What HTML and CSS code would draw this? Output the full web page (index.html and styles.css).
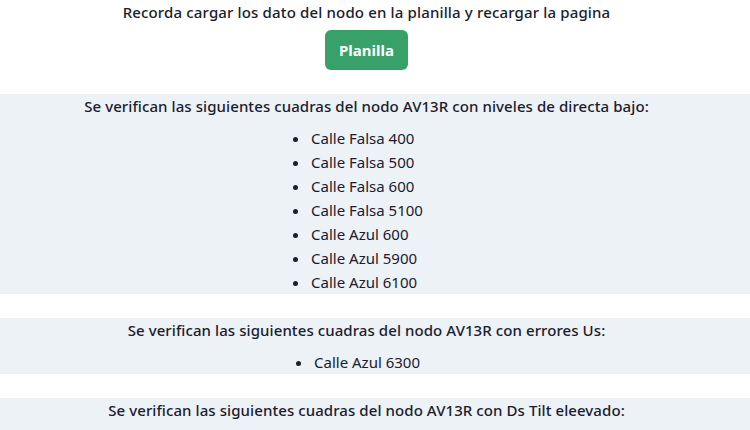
FILE: index.html
```html
<!DOCTYPE html>
<html lang="es">
<head>
<meta charset="utf-8">
<title>Planilla</title>
<link rel="stylesheet" href="styles.css">
</head>
<body>
  <header class="intro">
    <p class="title">Recorda cargar los dato del nodo en la planilla y recargar la pagina</p>
    <button class="btn">Planilla</button>
  </header>

  <section class="block">
    <p class="block-title">Se verifican las siguientes cuadras del nodo AV13R con niveles de directa bajo:</p>
    <ul class="list">
      <li>Calle Falsa 400</li>
      <li>Calle Falsa 500</li>
      <li>Calle Falsa 600</li>
      <li>Calle Falsa 5100</li>
      <li>Calle Azul 600</li>
      <li>Calle Azul 5900</li>
      <li>Calle Azul 6100</li>
    </ul>
  </section>

  <section class="block">
    <p class="block-title">Se verifican las siguientes cuadras del nodo AV13R con errores Us:</p>
    <ul class="list">
      <li>Calle Azul 6300</li>
    </ul>
  </section>

  <section class="block">
    <p class="block-title">Se verifican las siguientes cuadras del nodo AV13R con Ds Tilt eleevado:</p>
    <ul class="list">
      <li>Calle Azul 6500</li>
    </ul>
  </section>
</body>
</html>
```

FILE: styles.css
```css
html, body {
  margin: 0;
  padding: 0;
  background: #ffffff;
}

body {
  font-family: "Noto Sans", "Open Sans", "Liberation Sans", sans-serif;
  font-size: 15px;
  line-height: 24px;
  color: #1a202c;
}

.intro {
  display: flex;
  flex-direction: column;
  align-items: center;
  padding-right: 17px;
  margin-bottom: 24px;
}

.title {
  margin: 0;
  font-weight: 500;
  letter-spacing: 0.15px;
}

.btn {
  margin-top: 6px;
  height: 40px;
  padding: 0 14.5px;
  border: none;
  border-radius: 6px;
  background: #38a169;
  color: #ffffff;
  font-family: inherit;
  font-size: 15px;
  font-weight: 700;
  cursor: pointer;
}

.block {
  background: #edf2f7;
  display: flex;
  flex-direction: column;
  align-items: center;
  padding-right: 17px;
  margin-bottom: 24px;
}

.block-title {
  margin: 0;
  font-weight: 500;
  letter-spacing: 0.08px;
}

.list {
  margin: 8px 0 0 0;
  padding: 0;
  list-style: disc outside;
}

.list li {
  line-height: 24px;
  padding-left: 1px;
}
```
